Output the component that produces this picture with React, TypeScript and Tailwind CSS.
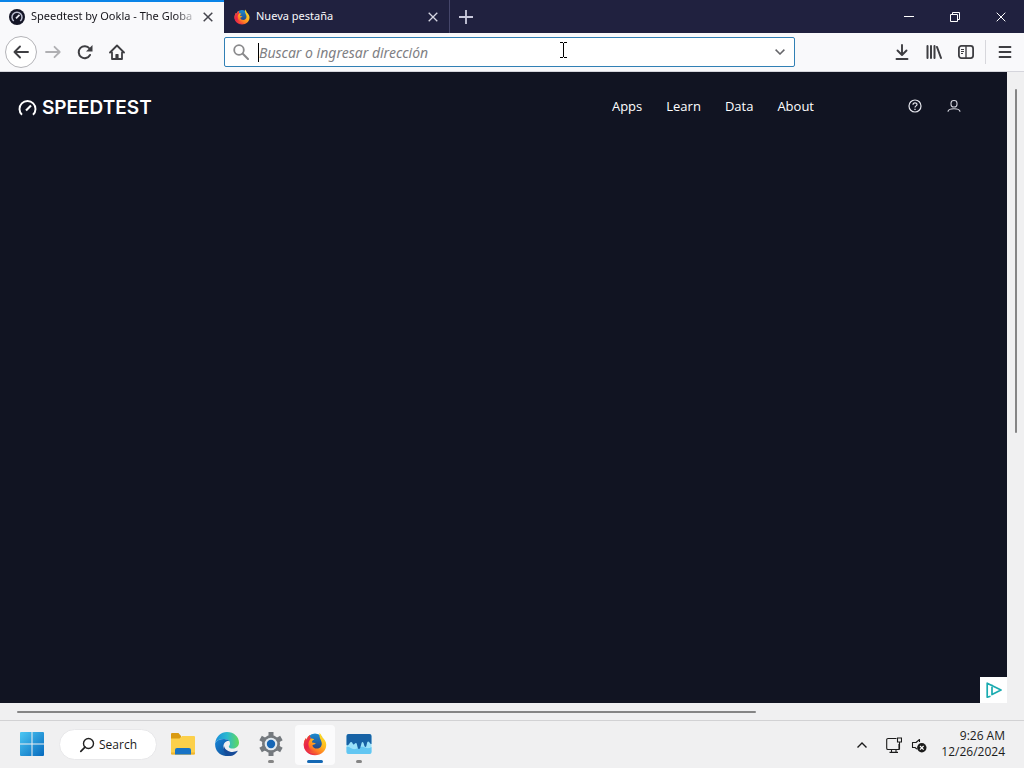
import { useId, type ReactNode } from "react";

function FirefoxLogo({ className }: { className: string }) {
  const id = useId();
  return (
    <svg viewBox="0 0 32 32" className={className} aria-hidden="true">
      <defs>
        <linearGradient id={id + "f"} x1="0.85" y1="0.05" x2="0.2" y2="0.95">
          <stop offset="0" stopColor="#ffe226" />
          <stop offset="0.4" stopColor="#ffb81e" />
          <stop offset="0.7" stopColor="#ff7a24" />
          <stop offset="1" stopColor="#e3134f" />
        </linearGradient>
        <linearGradient id={id + "g"} x1="0.5" y1="0" x2="0.5" y2="1">
          <stop offset="0" stopColor="#1c8bd0" />
          <stop offset="1" stopColor="#273a7c" />
        </linearGradient>
        <linearGradient id={id + "r"} x1="0" y1="0" x2="0.8" y2="1">
          <stop offset="0" stopColor="#f0503c" />
          <stop offset="0.5" stopColor="#e8204a" />
          <stop offset="1" stopColor="#f8632a" />
        </linearGradient>
      </defs>
      <circle cx="16" cy="14" r="12" fill={`url(#${id}g)`} />
      <path
        d="M22 1c2 2 3 4 3.500 6 3 2.500 5.500 5.500 5.500 10 0 8-6.500 14-15 14S1 25 1 17c0-4 1.500-7 3-9l.5 2.500C6 7 8 4.500 9.500 4c-.5 2 0 3.500 1 4.500 2 0 3.500.4 4.500 1.500-2 .8-3 2-3 3.500 1.500 1 3 .8 5 1-1 2-3 2-4.500 3 .5 3 3 4.500 6 4.500 4 0 6.500-3 6.500-6.500 0-5-4-7-3-14.500z"
        fill={`url(#${id}f)`}
      />
      <path
        d="M4 8l.5 2.500C6 7 8 4.500 9.500 4c-.5 2 0 3.500 1 4.500-2.500 3-4 6-3 10 1 5 5 8 11 8.500-7 3.500-17.500-1-17.500-10 0-4 1.500-7 3-9z"
        fill={`url(#${id}r)`}
      />
    </svg>
  );
}

function SpeedtestFavicon() {
  return (
    <svg viewBox="0 0 16 16" className="size-4 shrink-0" aria-hidden="true">
      <circle cx="8" cy="8" r="8" fill="#141526" />
      <path d="M4.800 12A5 5 0 1 1 11.200 12" fill="none" stroke="#b9bccf" strokeWidth="1.500" />
      <path d="M7 9.300L10.500 5.800" stroke="#e6e7f0" strokeWidth="1.700" />
    </svg>
  );
}

function CloseIcon({ className }: { className: string }) {
  return (
    <svg viewBox="0 0 10 10" className={className} fill="none" stroke="currentColor" aria-hidden="true">
      <path d="M0.700 0.700L9.300 9.300M9.300 0.700L0.700 9.300" />
    </svg>
  );
}

function IconButton({ label, className, children }: { label: string; className: string; children: ReactNode }) {
  return (
    <button type="button" aria-label={label} className={"flex shrink-0 items-center justify-center " + className}>
      {children}
    </button>
  );
}

function TabStrip() {
  return (
    <header className="flex h-[33px] bg-[#20213f] text-[11px]">
      <div className="flex w-56 items-center border-t-2 border-[#0a84e8] bg-[#f9f9fb] pr-2.5 pb-0.5 pl-[9px] text-[#15141a]">
        <SpeedtestFavicon />
        <a
          href="#speedtest"
          className="ml-[6px] min-w-0 flex-1 overflow-hidden whitespace-nowrap [mask-image:linear-gradient(to_right,black_86%,transparent)]"
        >
          Speedtest by Ookla - The Globa
        </a>
        <IconButton label="Cerrar pestaña Speedtest" className="ml-1 size-3">
          <CloseIcon className="size-2.5 stroke-[1.500] text-[#45454d]" />
        </IconButton>
      </div>
      <div className="flex w-[226px] items-center border-r border-[#45466a] pr-2.5 pl-2.5 text-[#f9f9fb]">
        <FirefoxLogo className="size-4 shrink-0" />
        <a href="#nueva" className="ml-[6px] flex-1 whitespace-nowrap">
          Nueva pestaña
        </a>
        <IconButton label="Cerrar pestaña nueva" className="size-3">
          <CloseIcon className="size-2.5 stroke-[1.300] text-[#d6d6e2]" />
        </IconButton>
      </div>
      <IconButton label="Abrir pestaña nueva" className="w-8 text-[#c9c9dc]">
        <svg viewBox="0 0 14 14" className="size-3.5" stroke="currentColor" strokeWidth="1.800" aria-hidden="true">
          <path d="M7 0v14M0 7h14" />
        </svg>
      </IconButton>
      <div className="ml-auto flex text-white">
        <IconButton label="Minimizar" className="w-[46px]">
          <svg viewBox="0 0 10 10" className="size-2.5" stroke="currentColor" aria-hidden="true">
            <path d="M0 4.500h10" />
          </svg>
        </IconButton>
        <IconButton label="Restaurar" className="w-[46px]">
          <svg viewBox="0 0 10 10" className="size-2.5" fill="none" stroke="currentColor" aria-hidden="true">
            <path d="M0.500 2.500h7v7h-7zM2.500 2.500v-2h7v7h-2" />
          </svg>
        </IconButton>
        <IconButton label="Cerrar" className="w-[46px]">
          <CloseIcon className="size-2.5" />
        </IconButton>
      </div>
    </header>
  );
}

function Toolbar() {
  return (
    <div className="flex h-[39px] items-center border-b border-[#d5d5dc] bg-[#f9f9fb] pr-[3px] pl-[5px] text-[#3e3e42]">
      <IconButton label="Atrás" className="size-8 rounded-full border border-[#b4b4b8] bg-white">
        <svg viewBox="0 0 16 16" className="size-4" fill="none" stroke="currentColor" strokeWidth="1.900" strokeLinecap="round" strokeLinejoin="round" aria-hidden="true">
          <path d="M15 8H1.500M7 2.500L1.500 8 7 13.500" />
        </svg>
      </IconButton>
      <IconButton label="Adelante" className="size-8 text-[#b0b0b3]">
        <svg viewBox="0 0 16 16" className="size-4" fill="none" stroke="currentColor" strokeWidth="1.800" strokeLinecap="round" strokeLinejoin="round" aria-hidden="true">
          <path d="M1 8h13.500M9.500 2.800L14.700 8l-5.200 5.200" />
        </svg>
      </IconButton>
      <IconButton label="Recargar" className="size-8">
        <svg viewBox="0 0 16 16" className="size-4" fill="none" stroke="currentColor" strokeWidth="2" strokeLinecap="round" aria-hidden="true">
          <path d="M13 11A6 6 0 1 1 12.500 4.500" />
          <path d="M15.500 1v6.500H9z" fill="currentColor" stroke="none" />
        </svg>
      </IconButton>
      <IconButton label="Inicio" className="size-8">
        <svg viewBox="0 0 16 16" className="size-4" fill="none" stroke="currentColor" strokeWidth="1.800" strokeLinecap="round" strokeLinejoin="round" aria-hidden="true">
          <path d="M1 8.500L8 1.500l7 7M3 8.500V15h10V8.500" />
          <path d="M7 15v-4.500h2V15z" fill="currentColor" strokeWidth="1.200" />
        </svg>
      </IconButton>
      <div className="w-[91px] shrink-0" />
      <div className="relative flex h-[30px] min-w-0 flex-1 items-center rounded-xs border border-[#3180b5] bg-white px-2">
        <svg viewBox="0 0 16 16" className="size-4 shrink-0 text-[#8a8a8c]" fill="none" stroke="currentColor" strokeLinecap="round" aria-hidden="true">
          <circle cx="6" cy="6" r="4.800" strokeWidth="1.800" />
          <path d="M9.800 9.800L15 15" strokeWidth="2" />
        </svg>
        <span className="ml-[9px] h-[19px] w-px shrink-0 bg-black" />
        <input
          type="text"
          aria-label="Buscar o ingresar dirección"
          placeholder="Buscar o ingresar dirección"
          className="h-7 min-w-0 flex-1 bg-transparent text-sm text-[#15141a] outline-none placeholder:text-[#808084] placeholder:italic"
        />
        <IconButton label="Mostrar historial" className="w-3 text-[#66666a]">
          <svg viewBox="0 0 10 6" className="h-1.5 w-2.5" fill="none" stroke="currentColor" strokeWidth="1.500" aria-hidden="true">
            <path d="M0.600 0.600L5 5l4.400-4.400" />
          </svg>
        </IconButton>
        <svg viewBox="0 0 7 16" className="pointer-events-none absolute top-1 left-[335px] h-4 w-[7px]" fill="none" stroke="#000" aria-hidden="true">
          <path d="M0 .5h3M4 .5h3M3.500 1v14M0 15.500h3M4 15.500h3" />
        </svg>
      </div>
      <div className="w-[91px] shrink-0" />
      <IconButton label="Descargas" className="size-8">
        <svg viewBox="0 0 16 16" className="size-4" fill="none" stroke="currentColor" strokeWidth="1.900" strokeLinecap="round" strokeLinejoin="round" aria-hidden="true">
          <path d="M8 1v9.500M3.500 6.500L8 11l4.500-4.500M2.500 15h11" />
        </svg>
      </IconButton>
      <IconButton label="Biblioteca" className="size-8">
        <svg viewBox="0 0 16 16" className="size-4" stroke="currentColor" strokeWidth="2" strokeLinecap="round" aria-hidden="true">
          <path d="M1.500 2v12M5 2v12M8.500 2v12M11 3l4 11" />
        </svg>
      </IconButton>
      <IconButton label="Barra lateral" className="size-8">
        <svg viewBox="0 0 16 16" className="size-4" fill="none" stroke="currentColor" aria-hidden="true">
          <rect x="0.900" y="1.900" width="14.200" height="12.200" rx="2.500" strokeWidth="1.800" />
          <path d="M8 2v12" strokeWidth="1.400" />
          <path d="M3 5.500h3M3 7.500h3M3 9.500h2" />
        </svg>
      </IconButton>
      <span className="mx-[3px] h-6 w-px bg-[#d7d7dc]" />
      <IconButton label="Abrir menú" className="size-8">
        <svg viewBox="0 0 14 14" className="size-3.5" stroke="currentColor" strokeWidth="1.800" strokeLinecap="round" aria-hidden="true">
          <path d="M1.500 2h11M1.500 7h11M1.500 12h11" />
        </svg>
      </IconButton>
    </div>
  );
}

const navLinks = ["Apps", "Learn", "Data", "About"];

function SpeedtestPage() {
  return (
    <main className="relative min-w-0 flex-1 bg-[#111422] text-white">
      <div className="flex items-center pt-6 pr-[46px] pl-[18px]">
        <a href="#inicio" className="flex items-center gap-[5px]">
          <svg viewBox="0 0 19 18" className="h-[18px] w-[19px]" fill="none" stroke="#fff" strokeWidth="1.900" aria-hidden="true">
            <path d="M4 15.800A8 8 0 1 1 15 15.800" />
            <path d="M8 11.500L13 6.500" strokeWidth="2.100" />
          </svg>
          <span className="font-[Inter,sans-serif] text-[19px] leading-6 font-semibold">SPEEDTEST</span>
        </a>
        <nav className="ml-auto flex gap-6 pb-1 font-['Open_Sans',sans-serif] text-[13px] leading-5">
          {navLinks.map((link) => (
            <a key={link} href={"#" + link.toLowerCase()}>
              {link}
            </a>
          ))}
        </nav>
        <div className="ml-[94px] flex gap-[25px] pb-1">
          <IconButton label="Help" className="size-3.5">
            <svg viewBox="0 0 14 14" className="size-3.5" fill="none" stroke="#e4e5ec" aria-hidden="true">
              <circle cx="7" cy="7" r="6" strokeWidth="1.200" />
              <path d="M5 5.700C5 3.200 9 3.200 9 5.500 9 7 7 6.800 7 8.600" strokeWidth="1.200" />
              <path d="M7 9.700v1.300" strokeWidth="1.300" />
            </svg>
          </IconButton>
          <IconButton label="Account" className="size-3.5">
            <svg viewBox="0 0 14 14" className="size-3.5" fill="none" stroke="#d4d5de" strokeWidth="1.100" aria-hidden="true">
              <rect x="4" y="1.500" width="6" height="6.500" rx="2.800" />
              <path d="M1 12.800c0-4 12-4 12 0" />
            </svg>
          </IconButton>
        </div>
      </div>
      <a href="#adchoices" aria-label="AdChoices" className="absolute right-0 bottom-0 flex h-[26px] w-[27px] items-center justify-center bg-white">
        <svg viewBox="0 0 16 16" className="size-4" fill="none" stroke="#1aabb0" strokeWidth="1.700" strokeLinejoin="round" aria-hidden="true">
          <path d="M4.500 14.200L1.200 15.200V1.200L15 8 6 12.500V5" />
          <path d="M6 2.800v1.400" />
        </svg>
      </a>
    </main>
  );
}

function WindowsLogo() {
  return (
    <svg viewBox="0 0 24 24" className="size-6" aria-hidden="true">
      <defs>
        <linearGradient id="win" x1="0" y1="0" x2="1" y2="1">
          <stop offset="0" stopColor="#4cc8f4" />
          <stop offset="1" stopColor="#0669bd" />
        </linearGradient>
      </defs>
      <path d="M1 0h10.500v11.500H0V1a1 1 0 0 1 1-1zM12.500 0H23a1 1 0 0 1 1 1v10.500H12.500zM0 12.500h11.500V24H1a1 1 0 0 1-1-1zM12.500 12.500H24V23a1 1 0 0 1-1 1H12.500z" fill="url(#win)" />
    </svg>
  );
}

function FolderIcon() {
  return (
    <svg viewBox="0 0 26 24" className="h-6 w-[26px]" aria-hidden="true">
      <path d="M2 1h6.500L11 4v3H1V2a1 1 0 0 1 1-1z" fill="#d99a12" />
      <path d="M1 6.500h8.500L12 4h12a1 1 0 0 1 1 1v16.500a1 1 0 0 1-1 1H2a1 1 0 0 1-1-1z" fill="#fcd04b" />
      <path d="M1 20.500h24v1a1 1 0 0 1-1 1H2a1 1 0 0 1-1-1z" fill="#f0b431" />
      <path d="M5 22.500v-4.500a2 2 0 0 1 2-2h12a2 2 0 0 1 2 2v4.500z" fill="#1873c5" />
    </svg>
  );
}

function EdgeIcon() {
  return (
    <svg viewBox="0 0 24 24" className="size-6" aria-hidden="true">
      <defs>
        <linearGradient id="edgeTop" x1="0" y1="0.500" x2="1" y2="0.500">
          <stop offset="0" stopColor="#1b8edb" />
          <stop offset="0.500" stopColor="#2bb9cf" />
          <stop offset="1" stopColor="#62d95b" />
        </linearGradient>
        <linearGradient id="edgeLow" x1="0" y1="0" x2="1" y2="1">
          <stop offset="0" stopColor="#1687d9" />
          <stop offset="1" stopColor="#12468f" />
        </linearGradient>
      </defs>
      <path d="M.2 11C1 4.500 6 0 12 0c7 0 12 5 12 10.500 0 3.500-2.700 6-6 6-3 0-4.200-1-4.200-1.800 0-.8 1.200-1.200 1.200-3.200C15 8.500 12.500 7 9 7 5 7 1.500 8.500.2 11z" fill="url(#edgeTop)" />
      <path d="M.2 11C1.500 8.500 5 7 9 7c2.500 0 4.400.8 5.300 2C10 8.500 8 12 8.500 15.500c.5 3.500 3.500 6.500 7.500 8C7 26-.8 20 .2 11z" fill="url(#edgeLow)" />
      <path d="M9 14c.8 3.500 4.500 6 8.500 6 1.700 0 3.300-.5 4.700-1.200.4-.2.600.2.400.5C20.500 22.500 18 24 15 24c-5-1.500-7.500-5.500-6-10z" fill="#164b98" />
    </svg>
  );
}

function SettingsIcon() {
  return (
    <svg viewBox="0 0 24 24" className="size-6" aria-hidden="true">
      <g stroke="#74797e" strokeWidth="5">
        <path d="M12 0v24M1.600 6l20.800 12M1.600 18L22.400 6" />
      </g>
      <circle cx="12" cy="12" r="9" fill="#74797e" />
      <circle cx="12" cy="12" r="6.300" fill="#e3eaf0" />
      <circle cx="12" cy="12" r="4.200" fill="#1566b6" />
    </svg>
  );
}

function MonitorAppIcon() {
  return (
    <svg viewBox="0 0 26 20" className="h-5 w-[26px]" aria-hidden="true">
      <rect x="0.500" width="25" height="20" rx="2" fill="#9be2fa" />
      <path d="M.5 13c3-1 5 3 9 2s5-3 8-2 5 2 8 0v5a2 2 0 0 1-2 2h-21a2 2 0 0 1-2-2z" fill="#62c6f2" />
      <path d="M2.500 0h21a2 2 0 0 1 2 2v8c-1.500.5-2-3-3.500-2.500s-1 5.500-2.500 5.500-1.500-5-3-5-1.500 7-3.500 7-1.500-6-3-6-1.500 2-2.500 1.500S6.500 8 5 8s-2 4.500-4.500 3V2a2 2 0 0 1 2-2z" fill="#1762a5" />
    </svg>
  );
}

function TaskbarApp({ label, state, children }: { label: string; state?: "open" | "active"; children: ReactNode }) {
  return (
    <button
      type="button"
      aria-label={label}
      className={"relative flex size-10 items-center justify-center rounded pb-0.5 " + (state === "active" ? "bg-[#fbfbfc]" : "")}
    >
      {children}
      {state === "active" && <span className="absolute bottom-0.5 h-[3px] w-4 rounded-full bg-[#1468b4]" />}
      {state === "open" && <span className="absolute bottom-0.5 h-[3px] w-1.5 rounded-full bg-[#858585]" />}
    </button>
  );
}

function Taskbar() {
  return (
    <footer className="flex h-12 items-center border-t border-[#d2d2d4] bg-[#f0f0f1] pr-[19px] pl-3 text-xs text-[#1b1b1b]">
      <TaskbarApp label="Start">
        <WindowsLogo />
      </TaskbarApp>
      <button type="button" className="ml-[7px] flex h-[31px] w-[98px] items-center justify-center gap-1 rounded-full border border-[#e8e8ea] bg-white font-['Open_Sans',sans-serif]">
        <svg viewBox="0 0 16 16" className="size-4" fill="none" stroke="#222" strokeWidth="1.400" strokeLinecap="round" aria-hidden="true">
          <circle cx="9.500" cy="6.500" r="5" />
          <path d="M6 10.200L1.800 14.400" strokeWidth="1.700" />
        </svg>
        Search
      </button>
      <div className="ml-1.5 flex gap-1">
        <TaskbarApp label="File Explorer">
          <FolderIcon />
        </TaskbarApp>
        <TaskbarApp label="Microsoft Edge">
          <EdgeIcon />
        </TaskbarApp>
        <TaskbarApp label="Settings" state="open">
          <SettingsIcon />
        </TaskbarApp>
        <TaskbarApp label="Firefox" state="active">
          <FirefoxLogo className="size-6" />
        </TaskbarApp>
        <TaskbarApp label="Task Manager" state="open">
          <MonitorAppIcon />
        </TaskbarApp>
      </div>
      <div className="ml-auto flex items-center">
        <IconButton label="Show hidden icons" className="size-6">
          <svg viewBox="0 0 10 6" className="h-1.5 w-2.5" fill="none" stroke="currentColor" strokeWidth="1.400" aria-hidden="true">
            <path d="M0.500 5.500L5 1l4.500 4.500" />
          </svg>
        </IconButton>
        <IconButton label="Network" className="ml-3 h-6 w-4">
          <svg viewBox="0 0 16 16" className="size-4" fill="none" stroke="currentColor" strokeWidth="1.100" aria-hidden="true">
            <path d="M10.500 1.500H2A1.300 1.300 0 0 0 .7 2.800v8.400A1.300 1.300 0 0 0 2 12.500h11V7M5.500 12.500v2.800M10 12.500v2.800M3.500 15.400h8.500" />
            <path d="M11.500 1h4v4h-4zM13.500 5v7.500" />
          </svg>
        </IconButton>
        <IconButton label="Volume muted" className="ml-[9px] h-6 w-4">
          <svg viewBox="0 0 16 16" className="size-4" fill="none" stroke="currentColor" aria-hidden="true">
            <path d="M8.500 5V2.500L5 5.500H1.500v5H4l2 1.700" strokeWidth="1.100" strokeLinejoin="round" />
            <circle cx="10.800" cy="10.800" r="4.700" fill="#1b1b1b" stroke="none" />
            <path d="M9 9l3.600 3.600M12.600 9L9 12.600" stroke="#fff" strokeWidth="1.200" />
          </svg>
        </IconButton>
        <time dateTime="2024-12-26T09:26" className="ml-3.5 pb-0.5 text-right font-['Open_Sans',sans-serif] text-xs leading-4">
          <span className="block">9:26 AM</span>
          <span className="block">12/26/2024</span>
        </time>
      </div>
    </footer>
  );
}

export default function App() {
  return (
    <div className="flex min-h-screen flex-col bg-[#f0f0f1] font-['Noto_Sans','Open_Sans',sans-serif]">
      <TabStrip />
      <Toolbar />
      <div className="flex flex-1">
        <SpeedtestPage />
        <div className="flex w-[17px] flex-col items-center pt-[17px]">
          <div className="h-[56%] w-0.5 rounded-full bg-[#858585]" />
        </div>
      </div>
      <div className="flex h-[17px] items-center pr-[34px] pl-[17px]">
        <div className="h-0.5 w-[76%] rounded-full bg-[#858585]" />
      </div>
      <Taskbar />
    </div>
  );
}
